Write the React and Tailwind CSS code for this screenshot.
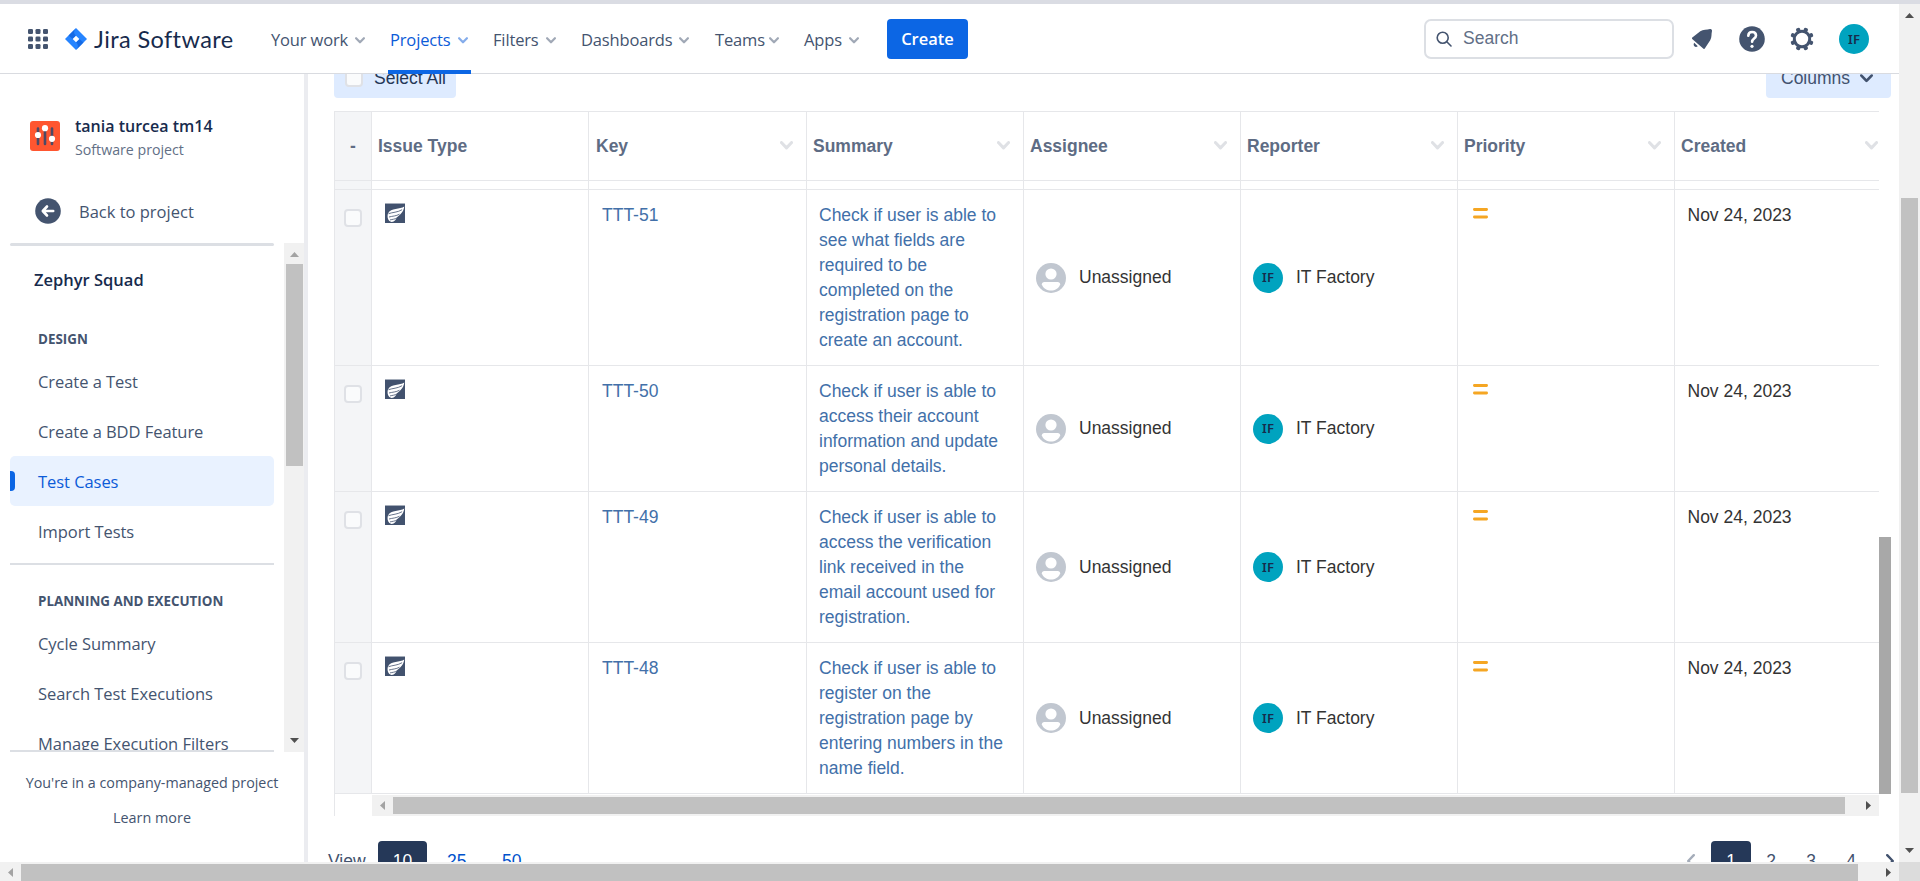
import React from "react";

const SEGOE = "font-['Open_Sans','Noto_Sans',sans-serif]";

function Chevron({ className, w = 2 }) {
  return (
    <svg viewBox="0 0 12 8" className={className} fill="none" stroke="currentColor" strokeWidth={w} strokeLinecap="round" strokeLinejoin="round">
      <path d="M1.3 1.3 6 6.2l4.700-4.900" />
    </svg>
  );
}

function Arrow({ dir, className }) {
  const d = { up: "M0 5 4.500 0 9 5Z", down: "M0 0h9L4.500 5Z", left: "M5 0v9L0 4.500Z", right: "M0 0v9l5-4.500Z" }[dir];
  const vertical = dir === "up" || dir === "down";
  return (
    <svg width={vertical ? 9 : 5} height={vertical ? 5 : 9} className={className} fill="currentColor">
      <path d={d} />
    </svg>
  );
}

const NAV = [
  { label: "Your work", box: "w-[94px] mr-[25px]" },
  { label: "Projects", box: "w-[78px] mr-[25px]", active: true },
  { label: "Filters", box: "w-[63px] mr-[25px]" },
  { label: "Dashboards", box: "w-[108px] mr-[26px]" },
  { label: "Teams", box: "w-[64px] mr-[25px]" },
  { label: "Apps", box: "w-[55px] mr-[28px]" },
];

function JiraMark() {
  return (
    <svg viewBox="0 0 22 22" className="h-[22px] w-[22px]">
      <path d="M11 0 22 11 11 22 0 11Z" fill="#2684ff" />
      <path d="M11 0 C8.500 2.500 8.500 5.500 11 7.700L7.700 11 3.500 7.500Z" fill="#1264de" opacity="0.8" />
      <path d="M11 22c2.500-2.500 2.500-5.500 0-7.700L14.300 11l4.200 3.500Z" fill="#1264de" opacity="0.8" />
      <path d="M11 7.700 14.300 11 11 14.300 7.700 11Z" fill="#fff" />
    </svg>
  );
}

function Header() {
  return (
    <header className={`relative z-10 flex h-[70px] shrink-0 items-center border-b border-[#d9dbe0] bg-white pt-px ${SEGOE}`}>
      <svg viewBox="0 0 20 20" className="ml-7 h-5 w-5" fill="#44546f">
        {[0, 7.5, 15].map((y) => [0, 7.5, 15].map((x) => <rect key={`${x}-${y}`} x={x} y={y} width="5" height="5" rx="1.300" />))}
      </svg>
      <div className="ml-[17px] flex w-[206px] items-center">
        <JiraMark />
        <span className="-mt-px ml-[7px] whitespace-nowrap font-['Lato',sans-serif] text-[23.5px] leading-7 tracking-[0.4px] text-[#172b4d]">Jira Software</span>
      </div>
      <nav className="flex h-full items-center">
        {NAV.map((n) => (
          <div key={n.label} className={`relative flex h-full shrink-0 items-center justify-between pt-[2px] ${n.box} ${n.active ? "text-[#0c5bd8]" : "text-[#44546f]"}`}>
            <span className="whitespace-nowrap text-[16.5px] font-medium tracking-[-0.15px]">{n.label}</span>
            <Chevron w={2.6} className="h-[7px] w-[10px] opacity-50" />
            {n.active && <span className="absolute -bottom-px -left-[2px] -right-[3px] h-1 bg-[#0c66e4]" />}
          </div>
        ))}
      </nav>
      <button className="flex h-10 w-[81px] items-center justify-center rounded-[4px] bg-[#0c66e4] pt-px text-[16.5px] font-semibold text-white">Create</button>
      <div className="ml-[456px] flex h-10 w-[250px] items-center rounded-[7px] border-2 border-[#dcdfe4] pl-[10px]">
        <svg viewBox="0 0 16 16" className="h-4 w-4" fill="none" stroke="#44546f" strokeWidth="1.600" strokeLinecap="round">
          <circle cx="6.700" cy="6.700" r="5.500" />
          <path d="m10.800 10.800 4.200 4.200" />
        </svg>
        <span className="-mt-[2px] ml-[11px] font-['Liberation_Sans',sans-serif] text-[17.500px] text-[#626f86]">Search</span>
      </div>
      <svg viewBox="0 0 20 20" className="ml-[18px] h-5 w-5" fill="#44546f">
        <path d="M0 8.700 8.300 2.200C11 .3 15 .900 18 0c1.200-.2 2.200.8 2 2-.8 3 0 6.500-1.800 9.200L12.800 19.600c-.5.600-1.200.5-1.600 0L.2 9.900c-.4-.4-.5-.8-.2-1.200Z" />
        <path d="M2.200 13.800 5.800 17.300c-1.200 1-2.600.900-3.400 0-.9-.9-1-2.300-.2-3.500Z" />
      </svg>
      <svg viewBox="0 0 26 26" className="ml-[27px] h-[26px] w-[26px]">
        <circle cx="13" cy="13" r="12.800" fill="#44546f" />
        <path d="M9.300 9.700c.1-2.300 1.600-3.700 3.800-3.700 2.300 0 3.900 1.400 3.900 3.500 0 3-3.900 3-3.900 6.300" fill="none" stroke="#fff" strokeWidth="2.600" strokeLinecap="round" />
        <circle cx="13" cy="20.300" r="1.600" fill="#fff" />
      </svg>
      <svg viewBox="0 0 24 24" className="ml-[25px] h-6 w-6" fill="#44546f">
        <path fillRule="evenodd" d="M12 2.800a9.200 9.200 0 1 0 0 18.400 9.200 9.200 0 0 0 0-18.400Zm0 3a6.200 6.200 0 1 1 0 12.400 6.200 6.200 0 0 1 0-12.400Z" />
        {[22.5, 67.5, 112.5, 157.5, 202.5, 247.5, 292.5, 337.5].map((a) => (
          <rect key={a} x="9.900" y=".2" width="4.200" height="4.500" rx="1.600" transform={`rotate(${a} 12 12)`} />
        ))}
      </svg>
      <Initials className="ml-[25px] h-[30px] w-[30px]" />
    </header>
  );
}

function Initials({ className }) {
  return (
    <span className={`flex shrink-0 items-center justify-center rounded-full bg-[#00a3bf] font-['Noto_Sans',sans-serif] text-[13px] font-semibold leading-none text-[#172b4d] ${className}`}>
      IF
    </span>
  );
}

function NavItem({ children, active }) {
  return (
    <div className={`relative ml-[10px] flex h-[50px] w-[264px] shrink-0 items-center rounded-[5px] pl-[28px] pt-[2px] text-[16.5px] tracking-[-0.05px] whitespace-nowrap ${active ? "bg-[#e9f2ff] text-[#0c5bd8]" : "text-[#44546f]"}`}>
      {active && <span className="absolute left-0 top-[15px] h-5 w-[5px] rounded-r-[4px] bg-[#0c66e4]" />}
      {children}
    </div>
  );
}

function Sidebar() {
  return (
    <aside className={`flex w-[308px] shrink-0 flex-col border-r-4 border-[#ebecf0] ${SEGOE}`}>
      <div className="flex h-[77px] shrink-0 items-end pl-[30px]">
        <svg viewBox="0 0 30 30" className="h-[30px] w-[30px]">
          <rect width="30" height="30" rx="3" fill="#ff5630" />
          <path d="M8 7.500v15.500M15 7.500v15.500M22 7.500v15.500" stroke="#4d4a66" strokeWidth="2.600" strokeLinecap="round" />
          <circle cx="8" cy="14" r="3.100" fill="#fff" />
          <circle cx="15" cy="7.200" r="3.100" fill="#fff" />
          <circle cx="22" cy="17.800" r="3.100" fill="#fff" />
        </svg>
        <div className="-mb-[11px] ml-[15px] flex flex-col whitespace-nowrap">
          <span className="text-[16px] font-semibold leading-6 text-[#172b4d]">tania turcea tm14</span>
          <span className="text-[14.200px] leading-6 text-[#626f86]">Software project</span>
        </div>
      </div>
      <div className="mt-[47px] flex h-[26px] shrink-0 items-center pl-[35px]">
        <svg viewBox="0 0 26 26" className="h-[26px] w-[26px]">
          <circle cx="13" cy="13" r="12.800" fill="#44546f" />
          <path d="M12 8.500 7.800 13l4.200 4.500M8.200 13h10" fill="none" stroke="#fff" strokeWidth="2.600" strokeLinecap="round" strokeLinejoin="round" />
        </svg>
        <span className="ml-[18px] mt-[2px] text-[16.5px] text-[#44546f]">Back to project</span>
      </div>
      <div className="mt-[19px] flex h-[509px] shrink-0">
        <div className="flex w-[284px] flex-col overflow-hidden">
          <div className="ml-[10px] h-[3px] w-[264px] shrink-0 rounded bg-[#dcdfe4]" />
          <div className="mt-[22px] h-6 shrink-0 pl-[34px] text-[16.5px] font-semibold leading-6 text-[#172b4d]">Zephyr Squad</div>
          <div className="mt-[35px] h-6 shrink-0 pl-[38px] text-[13.4px] font-bold leading-6 text-[#44546f]">DESIGN</div>
          <div className="mt-[5px] flex shrink-0 flex-col">
            <NavItem>Create a Test</NavItem>
            <NavItem>Create a BDD Feature</NavItem>
            <NavItem active>Test Cases</NavItem>
            <NavItem>Import Tests</NavItem>
          </div>
          <div className="ml-[10px] mt-[7px] h-[2px] w-[264px] shrink-0 bg-[#dcdfe4]" />
          <div className="mt-[24px] h-6 shrink-0 pl-[38px] text-[13.4px] font-bold leading-6 text-[#44546f]">PLANNING AND EXECUTION</div>
          <div className="mt-[5px] flex h-[132px] shrink-0 flex-col overflow-hidden">
            <NavItem>Cycle Summary</NavItem>
            <NavItem>Search Test Executions</NavItem>
            <NavItem>Manage Execution Filters</NavItem>
          </div>
          <div className="ml-[10px] h-[2px] w-[264px] shrink-0 bg-[#dcdfe4]" />
        </div>
        <div className="flex w-5 flex-col items-center bg-[#f1f1f1]">
          <Arrow dir="up" className="mt-[9px] shrink-0 text-[#a3a3a3]" />
          <div className="mt-[7px] h-[202px] w-[17px] bg-[#c1c1c1]" />
          <Arrow dir="down" className="mb-[9px] mt-auto shrink-0 text-[#505050]" />
        </div>
      </div>
      <div className="flex flex-col items-center whitespace-nowrap pt-[19px] text-[14.300px] leading-6 text-[#44546f]">
        <span>You're in a company-managed project</span>
        <span className="mt-[11px] text-[14.4px] font-medium">Learn more</span>
      </div>
    </aside>
  );
}

const COLS = ["Issue Type", "Key", "Summary", "Assignee", "Reporter", "Priority", "Created"];

const ROWS = [
  { key: "TTT-51", h: "h-[176px]", lines: ["Check if user is able to", "see what fields are", "required to be", "completed on the", "registration page to", "create an account."] },
  { key: "TTT-50", h: "h-[126px]", lines: ["Check if user is able to", "access their account", "information and update", "personal details."] },
  { key: "TTT-49", h: "h-[151px]", lines: ["Check if user is able to", "access the verification", "link received in the", "email account used for", "registration."] },
  { key: "TTT-48", h: "h-[151px]", lines: ["Check if user is able to", "register on the", "registration page by", "entering numbers in the", "name field."] },
];

const GRID = "grid grid-cols-[37px_217px_218px_217px_217px_217px_217px_204px] border-b border-[#e6e7ea]";
const CELL = "border-r border-[#e6e7ea]";

function ZephyrIcon() {
  return (
    <svg viewBox="0 0 20 20" className="h-5 w-5">
      <rect width="20" height="20" fill="#42526e" />
      <rect width="20" height="1" fill="#a5adba" />
      <path d="M19.300 3.500C15 6.500 6 4.500 3 10.500 1.800 14 3.200 18.700 6.600 18.900c2.800.1 4.200-2 5.400-4.600C14.500 12 18.500 9.500 19.300 3.500Z" fill="#fff" />
      <path d="M3.500 10.700c4-1.500 9-1.200 13.600-4M4 14c3.500-1 7-.8 10.500-2.800M5 16.900c2.500-.6 4.500-.6 7-1.900" fill="none" stroke="#42526e" strokeWidth=".8" />
    </svg>
  );
}

function Row({ row }) {
  return (
    <div className={`${GRID} ${row.h}`}>
      <div className={`${CELL} bg-[#f4f5f7] pl-[9px] pt-[19px]`}>
        <div className="h-[18px] w-[18px] rounded-[4px] border-2 border-[#dfe1e6] bg-[#fafbfc]" />
      </div>
      <div className={`${CELL} pl-[13px] pt-[13px]`}><ZephyrIcon /></div>
      <div className={`${CELL} pl-[13px] pt-[13px] text-[#4270a9]`}>{row.key}</div>
      <div className={`${CELL} flex flex-col whitespace-nowrap pl-[12px] pt-[13px] text-[#4270a9]`}>
        {row.lines.map((l) => <span key={l}>{l}</span>)}
      </div>
      <div className={`${CELL} flex items-center pl-[12px]`}>
        <svg viewBox="0 0 30 30" className="h-[30px] w-[30px]">
          <circle cx="15" cy="15" r="15" fill="#c1c7d0" />
          <circle cx="15" cy="11" r="5.600" fill="#fff" />
          <path d="M5.800 21.500c0-1.500 1-2.500 2.600-2.500h13.200c1.600 0 2.600 1 2.600 2.500C22.500 25.500 19 27.600 15 27.600s-7.500-2.100-9.200-6.100Z" fill="#fff" />
        </svg>
        <span className="ml-[13px] text-[#333]">Unassigned</span>
      </div>
      <div className={`${CELL} flex items-center pl-[12px]`}>
        <Initials className="h-[30px] w-[30px]" />
        <span className="ml-[13px] text-[#333]">IT Factory</span>
      </div>
      <div className={`${CELL} pl-[14.5px] pt-[18px]`}>
        <svg viewBox="0 0 15 11" className="h-[11px] w-[15px]" stroke="#f5a623" strokeWidth="2.800" strokeLinecap="round">
          <path d="M1.400 1.500h12.200M1.400 9h12.200" />
        </svg>
      </div>
      <div className="pl-[12.5px] pt-[13px] text-[#333]">Nov 24, 2023</div>
    </div>
  );
}

function Table() {
  return (
    <div className="mt-[13px] flex h-[705px] shrink-0">
      <div className="w-[1545px] shrink-0 border-l border-t border-[#e6e7ea]">
        <div className={`${GRID} h-[69px] font-bold text-[#5e6c84]`}>
          <div className={`${CELL} flex items-center justify-center bg-[#f4f5f7]`}>-</div>
          {COLS.map((c, i) => (
            <div key={c} className={`flex items-center justify-between ${i === 1 ? "pl-[7px]" : "pl-[6px]"} ${i === 6 ? "pr-px" : `${CELL} pr-[13px]`}`}>
              {c}
              {i > 0 && <Chevron w={2.8} className="-mt-px h-[9px] w-[13px] text-[#dfe1e5]" />}
            </div>
          ))}
        </div>
        <div className={`${GRID} h-[9px]`}>
          <div className={`${CELL} bg-[#f4f5f7]`} />
          {COLS.map((c, i) => <div key={c} className={i === 6 ? "" : CELL} />)}
        </div>
        {ROWS.map((r) => <Row key={r.key} row={r} />)}
        <div className="ml-[37px] mt-px flex h-[21px] items-center bg-[#f1f1f1] pl-[8px] pr-[8px]">
          <Arrow dir="left" className="text-[#a3a3a3]" />
          <div className="ml-[8px] h-[17px] w-[1452px] bg-[#c1c1c1]" />
          <Arrow dir="right" className="ml-auto text-[#505050]" />
        </div>
      </div>
      <div className="mt-[426px] h-[257px] w-3 bg-[#a8a8a8]" />
    </div>
  );
}

function Main() {
  return (
    <main className="flex min-w-0 grow flex-col overflow-hidden pl-[26px] font-['Liberation_Sans',Arial,sans-serif] text-[17.500px] leading-[25px] text-[#42526e]">
      <div className="-mt-[16px] flex h-10 w-[1557px] shrink-0 justify-between">
        <div className="flex w-[122px] items-center whitespace-nowrap rounded-[4px] bg-[#deebff] pl-[11px] text-[#253858]">
          <div className="mt-[-1px] h-[18px] w-[18px] rounded-[4px] border-2 border-[#dfe1e6] bg-[#fafbfc]" />
          <span className="ml-[11px]">Select All</span>
        </div>
        <div className="flex w-[125px] items-center rounded-[4px] bg-[#deebff] pl-[15px]">
          Columns
          <Chevron w={2.5} className="ml-[10px] mt-px h-[9px] w-[13px]" />
        </div>
      </div>
      <Table />
      <div className="-ml-[6px] mt-[25px] flex h-10 w-[1566px] shrink-0 items-center">
        <span className="w-[50px]">View</span>
        <span className="flex h-10 w-[49px] items-center justify-center rounded-[4px] bg-[#253858] text-white">10</span>
        <span className="ml-5 w-[55px] text-[#0052cc]">25</span>
        <span className="text-[#0052cc]">50</span>
        <svg viewBox="0 0 8 14" className="ml-auto h-[14px] w-2" fill="none" stroke="#a5adba" strokeWidth="2.400" strokeLinecap="round" strokeLinejoin="round"><path d="M6.800 1.200 1.200 7l5.600 5.800" /></svg>
        <span className="ml-4 flex h-10 w-10 items-center justify-center rounded-[4px] bg-[#253858] text-white">1</span>
        <span className="w-10 text-center">2</span>
        <span className="w-10 text-center">3</span>
        <span className="w-10 text-center">4</span>
        <svg viewBox="0 0 8 14" className="ml-[15px] h-[14px] w-2 shrink-0" fill="none" stroke="#42526e" strokeWidth="2.400" strokeLinecap="round" strokeLinejoin="round"><path d="M1.200 1.200 6.800 7l-5.600 5.800" /></svg>
      </div>
    </main>
  );
}

export default function App() {
  return (
    <div className="flex h-[881px] w-[1920px] flex-col overflow-hidden bg-white">
      <div className="h-1 shrink-0 bg-[#dadce3]" />
      <div className="flex h-[858px] shrink-0">
        <div className="flex w-[1899px] shrink-0 flex-col overflow-hidden">
          <Header />
          <div className="flex h-[788px] overflow-hidden">
            <Sidebar />
            <Main />
          </div>
        </div>
        <div className="flex w-[21px] flex-col items-center bg-[#f1f1f1]">
          <Arrow dir="up" className="mt-[9px] shrink-0 text-[#505050]" />
          <div className="mt-[180px] h-[595px] w-[17px] shrink-0 bg-[#c1c1c1]" />
          <Arrow dir="down" className="mb-[9px] mt-auto shrink-0 text-[#505050]" />
        </div>
      </div>
      <div className="flex h-[19px] shrink-0">
        <div className="flex w-[1899px] items-center bg-[#f1f1f1] px-2">
          <Arrow dir="left" className="mt-[2px] text-[#a3a3a3]" />
          <div className="ml-[8px] mt-[2px] h-[17px] w-[1837px] bg-[#c1c1c1]" />
          <Arrow dir="right" className="ml-auto mt-[2px] text-[#505050]" />
        </div>
        <div className="w-[21px] bg-[#dcdcdc]" />
      </div>
    </div>
  );
}
